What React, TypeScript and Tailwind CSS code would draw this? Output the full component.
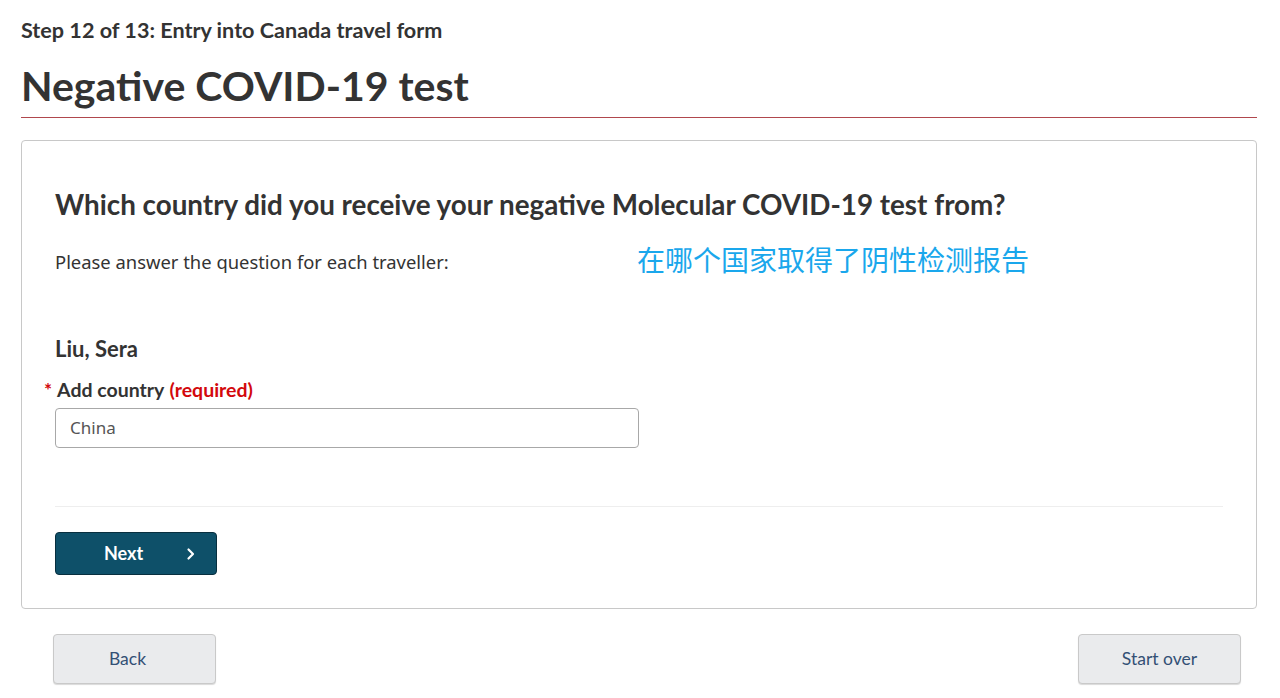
import React from "react";

export default function App() {
  return (
    <div className="w-[1280px] h-[698px] overflow-hidden bg-white text-[#333] font-['Lato','Noto_Sans',sans-serif]">
      <div className="px-[21px] pt-[18px] w-[1278px]">
        <div className="text-[21.6px] font-bold leading-[24px] text-[#333]">Step 12 of 13: Entry into Canada travel form</div>
        <h1 className="mt-[20px] text-[41px] font-bold leading-[48px] text-[#333] pb-[7px] border-b border-[#b0474d]">
          Negative COVID-19 test
        </h1>
        <div className="mt-[22px] border border-[#c8c8c8] rounded-[4px] px-[33px] pt-[47px] pb-[33px]">
          <h2 className="text-[27.8px] font-bold leading-[34px] text-[#333]">
            Which country did you receive your negative Molecular COVID-19 test from?
          </h2>
          <div className="flex items-center mt-[20px] h-[40px]">
            <p className="w-[582px] text-[18.4px] font-['Noto_Sans',sans-serif] text-[#333]">Please answer the question for each traveller:</p>
            <span className="mb-[6px] text-[28px] leading-[40px] text-[#1aa7ec] font-['Noto_Sans_CJK_SC',sans-serif]">在哪个国家取得了阴性检测报告</span>
          </div>
          <div className="mt-[54px] text-[22px] font-bold leading-[26px] text-[#333]">Liu, Sera</div>
          <label className="mt-[16px] ml-[-11px] flex items-center text-[19.5px] font-bold leading-[24px]">
            <span className="text-[#d3080c] mr-[5px] text-[19px]">*</span>
            <span className="text-[#333]">Add country</span>
            <span className="text-[#d3080c] ml-[5px]">(required)</span>
          </label>
          <div className="mt-[6px] w-[584px] h-[40px] border border-[#a8a8a8] rounded-[4px] flex items-center px-[14px] text-[17px] text-[#555] font-['Noto_Sans',sans-serif]">
            China
          </div>
          <div className="mt-[58px] border-t border-[#eeeeee]" />
          <button className="mt-[25px] w-[162px] h-[43px] bg-[#0e5069] border border-[#082f3f] rounded-[4px] flex items-center text-white text-[18px] font-bold">
            <span className="ml-[48px]">Next</span>
            <svg className="ml-[42px]" width="12" height="14" viewBox="0 0 12 14" fill="none">
              <path d="M3.5 2.5 L8 7 L3.5 11.5" stroke="white" strokeWidth="2.2" strokeLinecap="round" strokeLinejoin="round" />
            </svg>
          </button>
        </div>
        <div className="mt-[25px] flex justify-between pl-[32px] pr-[16px]">
          <button className="w-[163px] h-[50px] pr-[14px] bg-[#eaebed] border border-[#c9c9c9] rounded-[4px] shadow-[0_1px_1px_rgba(0,0,0,0.15)] text-[17.5px] text-[#335075]">Back</button>
          <button className="w-[163px] h-[50px] bg-[#eaebed] border border-[#c9c9c9] rounded-[4px] shadow-[0_1px_1px_rgba(0,0,0,0.15)] text-[17.5px] text-[#335075]">Start over</button>
        </div>
      </div>
    </div>
  );
}
